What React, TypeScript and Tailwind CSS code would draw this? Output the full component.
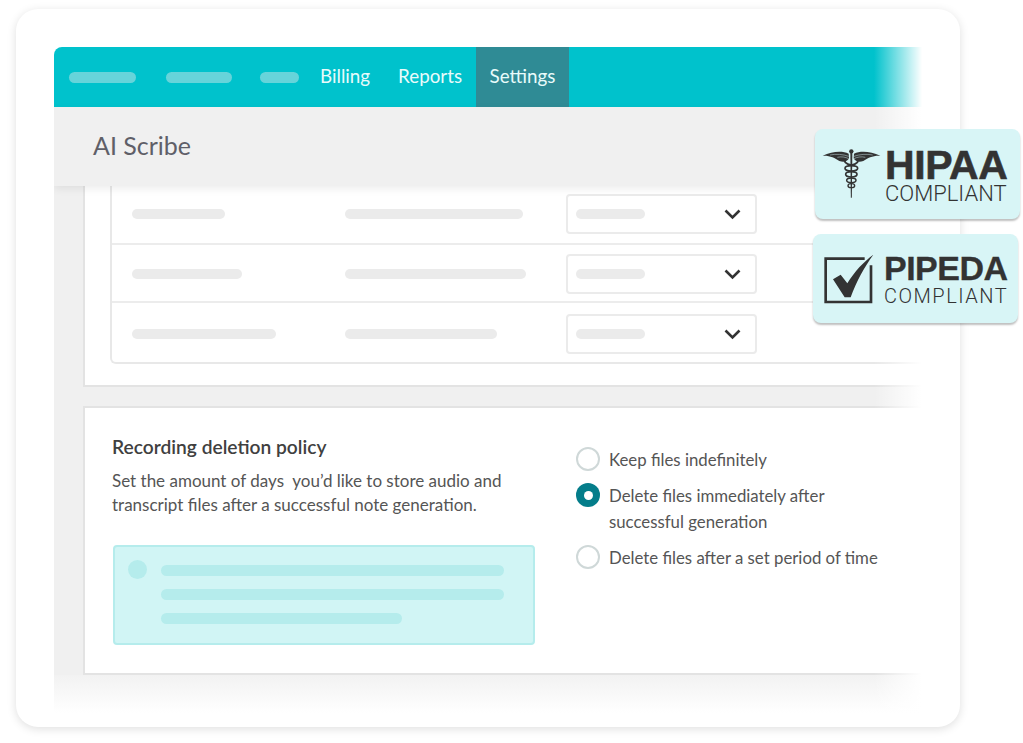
const rows = [
  { a: "w-[93px]", b: "w-[178px]", cls: "h-[59px] pb-[1px] border-b-2" },
  { a: "w-[110px]", b: "w-[181px]", cls: "h-[58px] pt-[2px] border-b-2" },
  { a: "w-[144px]", b: "w-[152px]", cls: "h-[59px] pt-[3px]" },
];

const options = [
  { label: "Keep files indefinitely", checked: false },
  { label: "Delete files immediately after\nsuccessful generation", checked: true },
  { label: "Delete files after a set period of time", checked: false },
];

function Bar({ className }: { className: string }) {
  return <div className={`h-[10px] rounded-full bg-[#ebebeb] ${className}`} />;
}

function Chevron() {
  return (
    <svg width="17" height="11" viewBox="0 0 17 11" fill="none" aria-hidden="true">
      <path d="M1.5 1.5 8.5 8.500 15.5 1.5" stroke="#333" strokeWidth="2.6" />
    </svg>
  );
}

function Caduceus() {
  return (
    <svg width="60" height="50" viewBox="20 30 180 150" aria-hidden="true">
      {/* wings */}
      <g fill="#333">
        <path d="M100 44C80 34 50 37 22 50C44 49 58 56 72 66C85 71 96 68 101 58Z" />
        <path d="M116 44C136 34 166 37 195 50C172 49 158 56 144 66C131 71 120 68 115 58Z" />
      </g>
      <g fill="none" stroke="#d8f5f6" strokeWidth="1.4">
        <path d="M44 48C62 44 84 46 100 52" />
        <path d="M66 55C78 52 90 54 100 59" />
        <path d="M172 48C154 44 132 46 116 52" />
        <path d="M150 55C138 52 126 54 116 59" />
      </g>
      {/* staff */}
      <circle cx="108" cy="37" r="6.500" fill="#333" />
      <path d="M105 42H111L109.500 176H106.500Z" fill="#333" />
      {/* snakes */}
      <g fill="none" stroke="#333" strokeWidth="5">
        <path d="M90 58C84 68 92 76 108 78C124 76 132 68 126 58" />
        <ellipse cx="108" cy="88" rx="19" ry="8" />
        <ellipse cx="108" cy="106" rx="17" ry="8" />
        <ellipse cx="108" cy="124" rx="14" ry="7" strokeWidth="4.500" />
        <ellipse cx="108" cy="140" rx="10" ry="6" strokeWidth="4" />
      </g>
    </svg>
  );
}

function CheckBox() {
  return (
    <svg width="50" height="50" viewBox="28 28 150 150" aria-hidden="true">
      <path d="M150 42H33V172H169V62" fill="none" stroke="#333" strokeWidth="8" />
      <path d="M55 104 78 90 98 116C120 80 146 52 176 30C150 66 125 110 108 158H90Z" fill="#333" />
    </svg>
  );
}

export default function App() {
  return (
    <div className="relative h-[743px] w-[1023px] overflow-hidden bg-white pl-[16px] pt-[9px] font-['Lato',sans-serif]">
      <div className="h-[718px] w-[944px] rounded-[22px] bg-white pl-[38px] pt-[38px] shadow-[0_2px_10px_rgba(0,0,0,0.13)]">
        <div className="relative w-[868px] overflow-hidden rounded-tl-lg">
          {/* top nav */}
          <div className="flex h-[60px] items-center bg-[#00c2cc] pl-[15px] text-[18.8px] text-[#e8fbfb]">
            <div className="h-[11px] w-[67px] rounded-full bg-[#66d4da]" />
            <div className="ml-[30px] h-[11px] w-[66px] rounded-full bg-[#66d4da]" />
            <div className="ml-[28px] h-[11px] w-[39px] rounded-full bg-[#66d4da]" />
            <span className="ml-[21px] pb-[2px]">Billing</span>
            <span className="ml-[28px] pb-[2px]">Reports</span>
            <div className="ml-[14px] flex h-full w-[93px] items-center justify-center bg-[#2f8b95] pb-[2px]">Settings</div>
          </div>

          <div className="relative z-10 flex h-[79px] items-center bg-[#f0f0f0] pb-[2px] pl-[39px] text-[25px] text-[#5f5f68] shadow-[0_3px_8px_rgba(0,0,0,0.07)]">
            AI Scribe
          </div>

          <div className="flex flex-col gap-[19px] bg-[#f0f0f0] pl-[29px]">
            {/* table panel */}
            <div className="h-[201px] border-b-2 border-l-2 border-[#e3e3e3] bg-white pl-[25px]">
              <div className="rounded-bl-md border-b-2 border-l-2 border-[#e8e8e8]">
                {rows.map((r, i) => (
                  <div key={i} className={`flex items-center border-[#ececec] pl-[20px] ${r.cls}`}>
                    <div className="w-[213px]">
                      <Bar className={r.a} />
                    </div>
                    <div className="w-[221px]">
                      <Bar className={r.b} />
                    </div>
                    <div className="flex h-[40px] w-[191px] items-center justify-between rounded-[4px] border-2 border-[#ebebeb] pl-2 pr-[14px]">
                      <Bar className="w-[69px]" />
                      <Chevron />
                    </div>
                  </div>
                ))}
              </div>
            </div>

            {/* recording policy panel */}
            <div className="flex h-[269px] border-l-2 border-y-2 border-[#e3e3e3] bg-white pl-[27px]">
              <div className="w-[464px] pt-[27px]">
                <h2 className="text-[19.2px] font-semibold leading-[24px] text-[#404040]">Recording deletion policy</h2>
                <p className="mt-[10px] whitespace-pre text-[17px] leading-[24px] text-[#555]">
                  {"Set the amount of days  you’d like to store audio and\ntranscript files after a successful note generation."}
                </p>
                <div className="ml-px mt-[28px] flex h-[100px] w-[422px] gap-[14px] rounded-[4px] border-2 border-[#b5ecec] bg-[#d1f5f5] pl-[13px] pt-[13px]">
                  <div className="h-[19px] w-[19px] rounded-full bg-[#b5ecec]" />
                  <div className="flex flex-col gap-[13px] pt-[5px]">
                    <div className="h-[11px] w-[343px] rounded-full bg-[#b5ecec]" />
                    <div className="h-[11px] w-[343px] rounded-full bg-[#b5ecec]" />
                    <div className="h-[11px] w-[241px] rounded-full bg-[#b5ecec]" />
                  </div>
                </div>
              </div>
              <div className="flex flex-col gap-[10px] pt-[39px] text-[16.8px] leading-[26px] text-[#555]">
                {options.map((o) => (
                  <div key={o.label} className="flex gap-[9px]">
                    {o.checked ? (
                      <div className="flex h-[24px] w-[24px] shrink-0 items-center justify-center rounded-full bg-[#047d8a]">
                        <div className="h-[9px] w-[9px] rounded-full bg-white" />
                      </div>
                    ) : (
                      <div className="h-[24px] w-[24px] shrink-0 rounded-full border-2 border-[#cfd8d8]" />
                    )}
                    <span className="whitespace-pre">{o.label}</span>
                  </div>
                ))}
              </div>
            </div>
          </div>

          <div className="h-[38px] bg-gradient-to-b from-[#f2f2f2] to-white" />

          {/* right edge fades out */}
          <div className="absolute bottom-0 right-0 top-0 z-20 w-[48px] bg-gradient-to-r from-transparent to-white" />
        </div>
      </div>

      {/* badges */}
      <div className="absolute left-[815px] top-[129px] z-30 flex h-[90px] w-[205px] items-center rounded-lg bg-[#d8f5f6] pl-[7px] shadow-[0_2px_2px_rgba(0,0,0,0.25)]">
        <Caduceus />
        <div className="ml-[3px] mt-[6px] flex flex-col text-[#333]">
          <span className="font-['Liberation_Sans',sans-serif] text-[41px] font-bold leading-[34px] tracking-[-0.4px] [-webkit-text-stroke:0.6px_#333]">HIPAA</span>
          <span className="font-['Roboto',sans-serif] text-[22px] font-light leading-[24px]">COMPLIANT</span>
        </div>
      </div>
      <div className="absolute left-[813px] top-[234px] z-30 flex h-[89px] w-[205px] items-center rounded-lg bg-[#d8f5f6] pl-[11px] shadow-[0_2px_2px_rgba(0,0,0,0.25)]">
        <CheckBox />
        <div className="ml-[10px] flex flex-col text-[#333]">
          <span className="font-['Liberation_Sans',sans-serif] text-[34px] font-bold leading-[34px] tracking-[-0.5px] [-webkit-text-stroke:0.3px_#333]">PIPEDA</span>
          <span className="font-['Roboto',sans-serif] text-[20px] font-light leading-[22px] tracking-[1.5px]">COMPLIANT</span>
        </div>
      </div>
    </div>
  );
}
